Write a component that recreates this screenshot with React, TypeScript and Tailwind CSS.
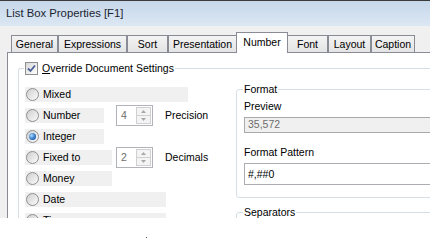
import React from 'react';

const tabs = [
  { label: 'General', w: 'w-[47px]' },
  { label: 'Expressions', w: 'w-[69px]' },
  { label: 'Sort', w: 'w-[41px]' },
  { label: 'Presentation', w: 'w-[69px]' },
  { label: 'Number', w: 'w-[52px]', active: true },
  { label: 'Font', w: 'w-[41px]' },
  { label: 'Layout', w: 'w-[43px]' },
  { label: 'Caption', w: 'w-[44px]' },
];

const Radio = ({ checked = false }: { checked?: boolean }) => (
  <span className="w-[13px] h-[13px] shrink-0 rounded-full border border-[#8e8f8f] bg-linear-to-br from-[#cfcfcf] to-[#fbfbfb] flex items-center justify-center">
    {checked && (
      <span className="w-[7px] h-[7px] rounded-full bg-[radial-gradient(circle_at_35%_35%,#a6dcff,#1c5fb8_70%)]" />
    )}
  </span>
);

const RadioRow = ({ label, w, checked }: { label: string; w: string; checked?: boolean }) => (
  <div className={`h-[15px] ${w} shrink-0 bg-[#f0f0f0] flex items-center gap-[4px] pl-[1px]`}>
    <Radio checked={checked} />
    <span>{label}</span>
  </div>
);

const Spin = ({ value, ml }: { value: string; ml: string }) => (
  <div className={`${ml} w-[37px] h-[21px] shrink-0 border border-[#b0b4b8] bg-white flex`}>
    <span className="flex-1 pl-[4px] leading-[19px] text-[#6d6d6d]">{value}</span>
    <div className="w-[16px] flex flex-col py-[1px] pr-[1px]">
      <div className="flex-1 border border-[#d0d0d0] bg-[#f4f4f4] flex items-center justify-center">
        <svg width="5" height="3" viewBox="0 0 5 3"><path d="M0 3 L2.5 0 L5 3 Z" fill="#a8a8a8" /></svg>
      </div>
      <div className="flex-1 border border-t-0 border-[#d0d0d0] bg-[#f4f4f4] flex items-center justify-center">
        <svg width="5" height="3" viewBox="0 0 5 3"><path d="M0 0 L2.5 3 L5 0 Z" fill="#a8a8a8" /></svg>
      </div>
    </div>
  </div>
);

export default function App() {
  return (
    <div className="w-[430px] h-[246px] bg-white overflow-hidden font-['Liberation_Sans',Arial,sans-serif] text-[10.5px] text-black leading-none">
      <div className="h-[218px] flex flex-col bg-[#f0f0f0] overflow-hidden">
        {/* title bar */}
        <div className="h-[26px] shrink-0 border-t border-[#3b3b3b] bg-linear-to-b from-[#c6d7ea] to-[#dce7f3] flex items-center pl-[6px]">
          <span className="text-[11.3px] text-[#1b2431]">List Box Properties [F1]</span>
        </div>

        {/* tabs */}
        <div className="h-[26px] shrink-0 flex items-end pl-[11px]">
          {tabs.map((t) =>
            t.active ? (
              <div
                key={t.label}
                className={`${t.w} h-[21px] -mb-px -mx-px z-10 border border-b-0 border-[#898c95] bg-white flex items-start justify-center pt-[4px]`}
              >
                {t.label}
              </div>
            ) : (
              <div
                key={t.label}
                className={`${t.w} h-[17px] border border-b-0 border-[#898c95] bg-linear-to-b from-[#f3f3f3] to-[#e4e4e4] flex items-center justify-center`}
              >
                {t.label}
              </div>
            )
          )}
        </div>

        {/* panel */}
        <div className="flex-1 ml-[7px] bg-white border-l border-t border-[#898c95] overflow-hidden pt-[8px]">
          <fieldset className="ml-[10px] w-[440px] border-l border-t border-[#d5dfe5] rounded-tl-[3px]">
            <legend className="ml-[5px] px-[1px] flex items-center gap-[4px] h-[15px]">
              <span className="w-[13px] h-[13px] border border-[#8f8f8f] bg-linear-to-br from-[#d8d8d8] to-white flex items-center justify-center">
                <svg width="9" height="9" viewBox="0 0 9 9">
                  <path d="M1 4.5 L3.5 7 L8 1.5" fill="none" stroke="#4a5f95" strokeWidth="1.8" />
                </svg>
              </span>
              <span>
                <span className="underline">O</span>verride Document Settings
              </span>
            </legend>

            <div className="flex items-start">
              {/* left column */}
              <div className="w-[217px] shrink-0 pl-[6px] pt-[11px] flex flex-col gap-[6px]">
                <RadioRow label="Mixed" w="w-[163px]" />
                <div className="h-[15px] flex items-center">
                  <RadioRow label="Number" w="w-[79px]" />
                  <Spin value="4" ml="ml-[12px]" />
                  <span className="ml-[12px]">Precision</span>
                </div>
                <RadioRow label="Integer" w="w-[79px]" checked />
                <div className="h-[15px] flex items-center">
                  <RadioRow label="Fixed to" w="w-[87px]" />
                  <Spin value="2" ml="ml-[4px]" />
                  <span className="ml-[12px]">Decimals</span>
                </div>
                <RadioRow label="Money" w="w-[87px]" />
                <RadioRow label="Date" w="w-[141px]" />
                <RadioRow label="Time" w="w-[141px]" />
              </div>

              {/* right column */}
              <div className="pt-[7px] shrink-0">
                <fieldset className="w-[230px] border border-[#d5dfe5] rounded-[3px] pl-[7px] pb-[12px]">
                  <legend className="ml-[-1px] px-[1px] h-[13px] flex items-center">Format</legend>
                  <div className="pt-[5px]">Preview</div>
                  <div className="mt-[5px] w-[210px] h-[16px] border border-[#a9a9a9] bg-[#f0f0f0] pl-[3px] flex items-center text-[#6d6d6d]">
                    35,572
                  </div>
                  <div className="mt-[14px]">Format Pattern</div>
                  <div className="mt-[6px] w-[210px] h-[22px] border border-[#abadb3] bg-white pl-[3px] flex items-center">
                    #,##0
                  </div>
                </fieldset>
                <fieldset className="mt-[8px] w-[230px] border border-[#d5dfe5] rounded-[3px] pl-[7px] h-[40px]">
                  <legend className="ml-[-1px] px-[1px] h-[13px] flex items-center">Separators</legend>
                </fieldset>
              </div>
            </div>
          </fieldset>
        </div>
      </div>
      <div className="pl-[146px] pt-[19px]">
        <div className="w-[1px] h-[1px] bg-[#555]" />
      </div>
    </div>
  );
}
